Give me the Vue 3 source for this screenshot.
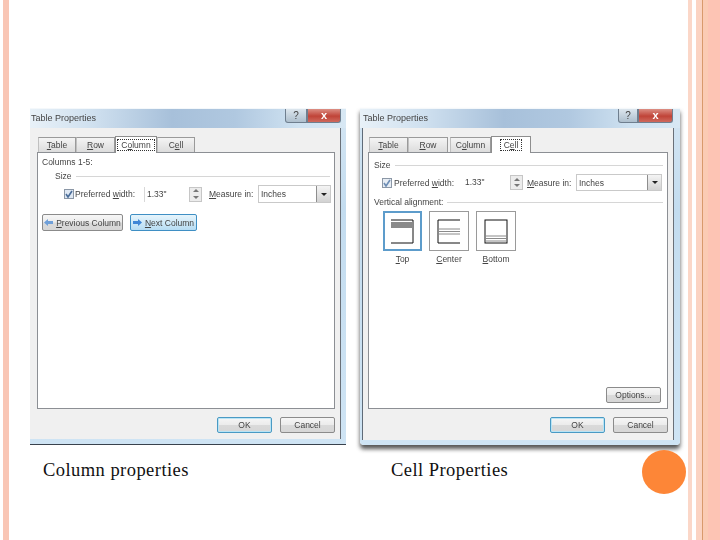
<script setup>
const shapes = [
  { label: 'Top', key: 'T', rest: 'op', cls: 'picked', paths: 'M391 220H413V243H391' },
  { label: 'Center', key: 'C', rest: 'enter', cls: '', paths: 'M460 220H438V243H460' },
  { label: 'Bottom', key: 'B', rest: 'ottom', cls: '', paths: '' }
]
</script>

<template>
  <div class="page">
    <div class="band-left"></div>
    <main class="main">
      <div class="dialogs">
        <section class="dialog first">
          <header class="titlebar">
            <span class="title">Table Properties</span>
            <span class="help">?</span>
            <span class="close">x</span>
          </header>
          <div class="client">
            <div class="tabs">
              <span class="tab t38"><u>T</u>able</span>
              <span class="tab t39"><u>R</u>ow</span>
              <span class="tab active t42"><i class="focus">C<u>o</u>lumn</i></span>
              <span class="tab t38">C<u>e</u>ll</span>
            </div>
            <div class="panel panel-one">
              <div class="line10">Columns 1-5:</div>
              <div class="group size-one"><span>Size</span><b></b></div>
              <div class="row row-one">
                <span class="check"><svg width="10" height="10" viewBox="0 0 10 10"><path d="M2 5l2 3 4-6" fill="none" stroke="#4a6d99" stroke-width="1.6"/></svg></span>
                <span class="pref">Preferred <u>w</u>idth:</span>
                <span class="value">1.33"</span>
                <span class="spin"><i class="up"></i><i class="down"></i></span>
                <span class="measure"><u>M</u>easure in:</span>
                <span class="select"><span>Inches</span><em><i class="down dark"></i></em></span>
              </div>
              <div class="nav">
                <button class="btn prev"><svg width="9" height="7" viewBox="0 0 9 7"><path d="M0 3.5L4 0v2h5v3H4v2z" fill="#6f9fd8"/></svg><span><u>P</u>revious Column</span></button>
                <button class="btn next"><svg width="9" height="7" viewBox="0 0 9 7"><path d="M9 3.5L5 0v2H0v3h5v2z" fill="#3f86d6"/></svg><span><u>N</u>ext Column</span></button>
              </div>
            </div>
            <footer class="foot">
              <button class="btn wide ok">OK</button>
              <button class="btn wide">Cancel</button>
            </footer>
          </div>
        </section>

        <section class="dialog second">
          <header class="titlebar">
            <span class="title">Table Properties</span>
            <span class="help">?</span>
            <span class="close">x</span>
          </header>
          <div class="client">
            <div class="tabs">
              <span class="tab t39"><u>T</u>able</span>
              <span class="tab t40"><u>R</u>ow</span>
              <span class="tab t41 gap">C<u>o</u>lumn</span>
              <span class="tab active t40"><i class="focus">C<u>e</u>ll</i></span>
            </div>
            <div class="panel panel-two">
              <div class="group"><span>Size</span><b></b></div>
              <div class="row row-two">
                <span class="check pale"><svg width="10" height="10" viewBox="0 0 10 10"><path d="M2 5l2 3 4-6" fill="none" stroke="#6d8db5" stroke-width="1.6"/></svg></span>
                <span class="pref">Preferred <u>w</u>idth:</span>
                <span class="value">1.33"</span>
                <span class="spin"><i class="up"></i><i class="down"></i></span>
                <span class="measure"><u>M</u>easure in:</span>
                <span class="select"><span>Inches</span><em><i class="down dark"></i></em></span>
              </div>
              <div class="group valign"><span>Vertical alignment:</span><b></b></div>
              <div class="shapes">
                <div v-for="s in shapes" :key="s.label" class="shape" :class="s.cls">
                  <span class="shape-box">
                    <svg v-if="s.label === 'Top'" width="24" height="25" viewBox="391 219 24 25">
                      <path :d="s.paths" fill="none" stroke="#111"/><rect x="391" y="222" width="22" height="6" fill="#8a8a8a"/>
                    </svg>
                    <svg v-else-if="s.label === 'Center'" width="24" height="25" viewBox="437 219 24 25">
                      <path :d="s.paths" fill="none" stroke="#111"/><path d="M438 229H460M438 231.500H460M438 234H460" stroke="#8a8a8a"/>
                    </svg>
                    <svg v-else width="24" height="25" viewBox="485 219 24 25">
                      <rect x="486" y="220" width="22" height="23" fill="none" stroke="#111"/><path d="M487 236H507M487 238.500H507M487 241H507" stroke="#8a8a8a"/>
                    </svg>
                  </span>
                  <span class="shape-label"><u>{{ s.key }}</u>{{ s.rest }}</span>
                </div>
              </div>
              <button class="btn wide options">Options...</button>
            </div>
            <footer class="foot">
              <button class="btn wide ok">OK</button>
              <button class="btn wide">Cancel</button>
            </footer>
          </div>
        </section>
      </div>
      <div class="captions">
        <p class="cap cap-one">Column properties</p>
        <p class="cap cap-two">Cell Properties</p>
      </div>
      <div class="dot"></div>
    </main>
    <aside class="band-right">
      <i class="s1"></i><i class="s2"></i><i class="s3"></i><i class="s4"></i><i class="s5"></i><i class="s6"></i>
    </aside>
  </div>
</template>

<style>
body { margin: 0; background: #fff; }
</style>

<style scoped>
.page { width: 720px; height: 540px; display: flex; overflow: hidden; background: #fff; font-family: "Liberation Sans", Arial, sans-serif; }
.band-left { width: 6px; margin-left: 3px; background: #f9c6b5; flex: none; }
.main { position: relative; flex: 1; min-width: 0; padding-top: 108px; box-sizing: border-box; }
.dialogs { display: flex; align-items: flex-start; gap: 14px; margin-left: 21px; }
.dialog { height: 337px; display: flex; flex-direction: column; box-sizing: border-box; background: linear-gradient(180deg, #d5e6f3, #c3dcef 30%, #cfe4f4); color: #444; font-size: 8.500px; line-height: 10px; filter: blur(0.5px); }
.first { width: 316px; border-bottom: 1px solid #39424d; }
.second { width: 320px; box-shadow: 0 4px 4px rgba(30, 30, 30, .75); border-radius: 0 0 4px 4px; }
.titlebar { height: 20px; flex: none; display: flex; align-items: flex-start; background: linear-gradient(90deg, #e8f1f8 0%, #cfe0ef 20%, #a7c0da 45%, #b0c8e0 65%, #cfe2f1 85%, #d8e8f4 100%); border-top: 1px solid #f4f8fb; box-sizing: border-box; }
.title { flex: 1; font-size: 9px; line-height: 14px; margin-top: 2px; padding-left: 1px; }
.second .title { padding-left: 3px; }
.help, .close { height: 14px; line-height: 13px; text-align: center; box-sizing: border-box; border: 1px solid #6f7f8f; border-top: 0; flex: none; }
.help { width: 22px; background: linear-gradient(180deg, #dce6ee, #aebfcd); border-radius: 0 0 0 3px; color: #444; font-size: 10px; }
.close { width: 34px; margin-right: 5px; background: linear-gradient(180deg, #dc8f84, #c04438 55%, #cf6a5e); border-radius: 0 0 3px 0; color: #fff; font-weight: 700; font-size: 11px; }
.second .help { width: 20px; }
.second .close { width: 35px; margin-right: 7px; }
.client { flex: 1; background: #f0f0f0; padding: 9px 5px 0 7px; margin-bottom: 5px; margin-right: 5px; border-right: 1px solid #6a7078; }
.second .client { margin-left: 2px; margin-right: 6px; padding-left: 5px; border-left: 1px solid #5f6b78; box-sizing: border-box; }
.tabs { display: flex; height: 15px; padding-left: 1px; }
.tab { box-sizing: border-box; height: 15px; text-align: center; line-height: 15px; background: linear-gradient(180deg, #f4f4f4, #dcdcdc); border: 1px solid #9a9a9a; border-left-color: #c0c0c0; border-bottom: 0; }
.t38 { width: 38px; } .t39 { width: 39px; } .t40 { width: 40px; } .t41 { width: 41px; } .t42 { width: 42px; }
.gap { margin-left: 2px; }
.tab.active { background: #fff; height: 17px; margin-top: -1px; position: relative; z-index: 1; line-height: 16px; border-color: #8e8e8e; }
.focus { font-style: normal; border: 1px dotted #333; padding: 0 3px; }
.panel { height: 257px; box-sizing: border-box; background: #fff; border: 1px solid #8c8f94; display: flex; flex-direction: column; }
.panel-one { padding: 4px 4px 0 4px; }
.panel-two { padding: 7px 4px 0 5px; }
.line10 { height: 10px; }
.group { height: 10px; display: flex; align-items: center; gap: 4px; }
.group b { flex: 1; height: 1px; background: #d6d6d6; }
.size-one { margin: 4px 0 0 13px; }
.row { display: flex; align-items: center; }
.row-one { height: 18px; margin: 4px 0 0 22px; }
.row-two { height: 17px; margin: 4px 1px 0 8px; }
.check { width: 10px; height: 10px; box-sizing: border-box; border: 1px solid #8b97a6; background: #dfe8f3; display: flex; align-items: center; justify-content: center; flex: none; }
.check svg { flex: none; }
.check.pale { background: #e7edf4; }
.pref { padding-left: 2px; box-sizing: border-box; flex: none; white-space: nowrap; }
.row-one .pref { width: 70px; padding-left: 1px; }
.row-two .pref { width: 69px; }
.value { width: 45px; padding-left: 2px; box-sizing: border-box; flex: none; border-left: 1px solid #d8d8d8; height: 15px; line-height: 15px; }
.row-two .value { width: 48px; padding-left: 3px; border-left: 0; margin-left: 1px; }
.spin { width: 11px; height: 13px; border: 1px solid #c6c6c6; display: flex; flex-direction: column; align-items: center; justify-content: space-around; background: #ececec; flex: none; }
.up { width: 0; height: 0; border: 3px solid transparent; border-top: 0; border-bottom-color: #777; }
.down { width: 0; height: 0; border: 3px solid transparent; border-bottom: 0; border-top-color: #777; }
.down.dark { border-top-color: #222; }
.measure { margin-left: 7px; width: 49px; flex: none; white-space: nowrap; }
.row-two .measure { margin-left: 4px; }
.select { flex: 1; align-self: stretch; display: flex; align-items: center; justify-content: space-between; border: 1px solid #c9c9c9; padding-left: 2px; box-sizing: border-box; }
.select em { width: 14px; align-self: stretch; display: flex; align-items: center; justify-content: center; background: linear-gradient(180deg, #f4f4f4, #d2d2d2); border-left: 1px solid #8e8e8e; box-sizing: border-box; }
.row-one .select { width: 73px; flex: none; }
.nav { display: flex; gap: 7px; margin-top: 11px; }
.btn { font: inherit; color: #444; padding: 0; box-sizing: border-box; border: 1px solid #8b8b8b; border-radius: 2px; background: linear-gradient(180deg, #f6f6f6, #ececec 48%, #dadada 52%, #d6d6d6); display: flex; align-items: center; justify-content: center; gap: 3px; line-height: 10px; }
.prev { width: 81px; height: 17px; }
.next { width: 67px; height: 17px; border-color: #3f8fc4; background: linear-gradient(180deg, #e6f4fc, #cfe9f8 50%, #b6dcf3); }
.wide { width: 55px; height: 16px; flex: none; }
.ok { border-color: #4a9ac4; box-shadow: inset 0 0 0 1px #b9e4f5; }
.valign { margin-top: 6px; }
.shapes { display: flex; gap: 7px; margin: 4px 0 0 9px; }
.shape { width: 40px; display: flex; flex-direction: column; align-items: center; }
.shape-box { width: 40px; height: 40px; box-sizing: border-box; border: 1px solid #9a9a9a; display: flex; align-items: center; justify-content: center; }
.picked { width: 39px; }
.picked .shape-box { width: 39px; border: 2px solid #5d9ccb; }
.shape-label { margin-top: 3px; }
.options { margin-top: auto; margin-bottom: 5px; align-self: flex-end; margin-right: 2px; }
.foot { display: flex; justify-content: flex-end; gap: 8px; padding-top: 8px; }
.captions { display: flex; margin-top: 14px; padding-left: 34px; }
.cap { margin: 0; font-family: "Liberation Serif", "Times New Roman", serif; font-size: 18.500px; letter-spacing: .45px; line-height: 22px; color: #111; white-space: nowrap; }
.cap-one { width: 348px; }
.dot { position: absolute; left: 633px; top: 450px; width: 44px; height: 44px; border-radius: 50%; background: #fd8637; }
.band-right { flex: none; width: 32px; display: flex; }
.band-right i { display: block; flex: none; }
.s1 { width: 4px; background: #fbd7c8; }
.s2 { width: 4px; background: #fff; }
.s3 { width: 6px; background: #fbd3c2; }
.s4 { width: 1px; background: #d99a6c; }
.s5 { width: 5px; background: #fbcbb4; }
.s6 { width: 12px; background: #fdc4b4; }
</style>
